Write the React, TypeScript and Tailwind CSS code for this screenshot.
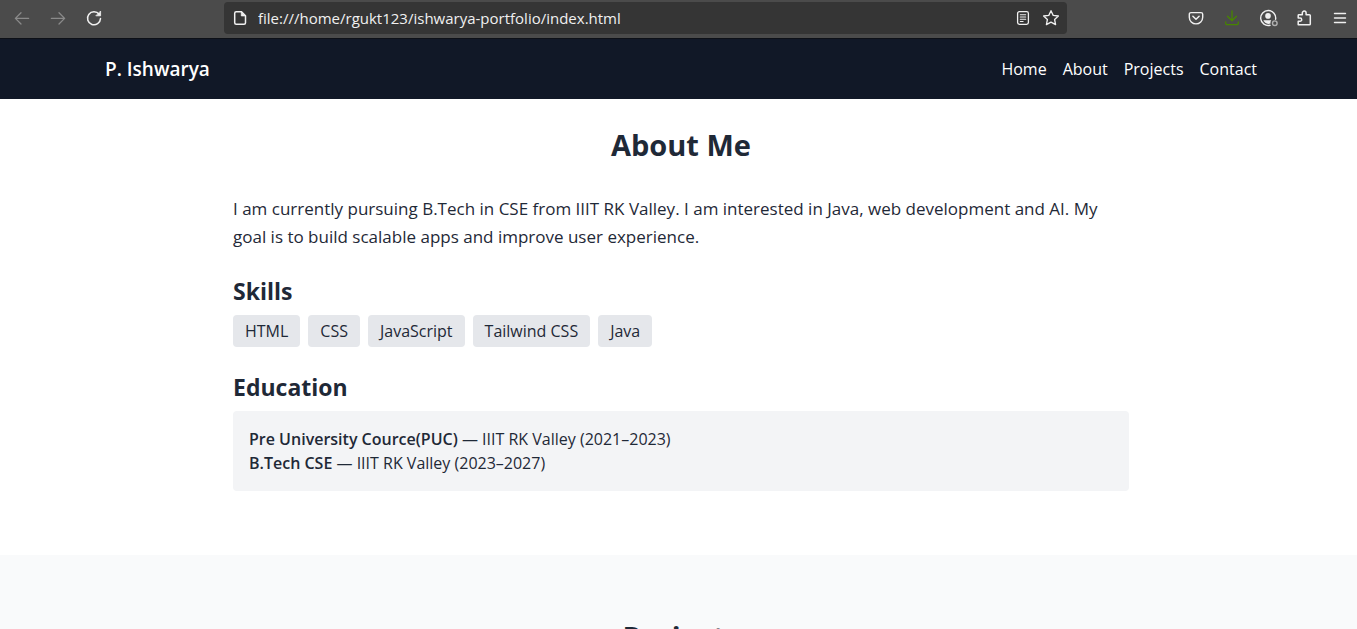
import React from "react";

type IconProps = { children: React.ReactNode; className?: string };

function Icon({ children, className = "" }: IconProps) {
  return (
    <svg
      viewBox="0 0 16 16"
      className={`size-4 overflow-visible ${className}`}
      fill="none"
      stroke="currentColor"
      strokeWidth="1.3"
      strokeLinecap="round"
      strokeLinejoin="round"
      aria-hidden="true"
    >
      {children}
    </svg>
  );
}

type ToolButtonProps = { label: string; className?: string; disabled?: boolean; children: React.ReactNode };

function ToolButton({ label, className = "text-[#f0f0f0]", disabled, children }: ToolButtonProps) {
  return (
    <button type="button" aria-label={label} disabled={disabled} className={`size-4 shrink-0 ${className}`}>
      <Icon>{children}</Icon>
    </button>
  );
}

function BrowserBar() {
  return (
    <div className="flex shrink-0 items-center border-b border-[#0d1017] bg-[#4b4b4b] pt-0.5 pr-[9px] pb-1 pl-3.5">
      <div className="flex gap-5">
        <ToolButton label="Back" disabled className="text-[#8a8a8a]">
          <path d="M14.6 8.4H1.4M7 2.8 1.4 8.4 7 14" />
        </ToolButton>
        <ToolButton label="Forward" disabled className="text-[#8a8a8a]">
          <path d="M1.4 8.4h13.2M9 2.8l5.6 5.6L9 14" />
        </ToolButton>
        <ToolButton label="Reload">
          <path d="M13.2 4.4A6.5 6.5 0 1 0 14.5 8.6" strokeWidth="1.5" />
          <path d="M14.6 1.4v4.4h-4.4z" fill="currentColor" strokeWidth="0.8" />
        </ToolButton>
      </div>

      <div className="mr-[121px] ml-[122px] flex h-8 min-w-0 flex-1 items-center rounded bg-[#353535] px-2 text-[#f0f0f0]">
        <Icon className="shrink-0">
          <path
            d="M4.2 1.7h5.3l4 4v7.1a1.5 1.5 0 0 1-1.5 1.5H4.2a1.5 1.5 0 0 1-1.5-1.5V3.2a1.5 1.5 0 0 1 1.5-1.5z"
            strokeWidth="1.5"
          />
          <path d="M9.3 1.9v4h4z" fill="currentColor" strokeWidth="0.8" />
        </Icon>
        <input
          type="text"
          aria-label="Address"
          defaultValue="file:///home/rgukt123/ishwarya-portfolio/index.html"
          className="ml-2.5 min-w-0 flex-1 bg-transparent text-[15px] leading-5 outline-none"
        />
        <div className="flex gap-3">
          <ToolButton label="Reader view">
            <rect x="2.6" y="1.6" width="10.8" height="12.8" rx="1.8" />
            <path d="M5.3 4.7h5.4M5.3 7h5.4M5.3 9.3h5.4M5.3 11.5h2.8" strokeWidth="1.1" />
          </ToolButton>
          <ToolButton label="Bookmark this page">
            <path d="M8 .7l2.2 4.700 5.200.6-3.800 3.500 1 5.100L8 12.100l-4.600 2.500 1-5.100L.6 6l5.200-.6z" />
          </ToolButton>
        </div>
      </div>

      <div className="flex gap-5">
        <ToolButton label="Save to Pocket">
          <path
            d="M3 2.6h10a1.7 1.7 0 0 1 1.7 1.7v2.9a6.7 6.7 0 0 1-13.4 0V4.3A1.7 1.7 0 0 1 3 2.6z"
            strokeWidth="1.4"
          />
          <path d="M4.9 6.3 8 9.2l3.1-2.9" strokeWidth="1.5" />
        </ToolButton>
        <ToolButton label="Downloads" className="text-[#478500]">
          <path d="M8 .8v9.7M3.5 6.3 8 10.7l4.5-4.4M1.7 12v1.3a1.4 1.4 0 0 0 1.4 1.4h9.8a1.4 1.4 0 0 0 1.4-1.4V12" />
        </ToolButton>
        <ToolButton label="Account">
          <path d="M15.6 9.2A7.5 7.5 0 1 0 10 15.3" strokeWidth="1.4" />
          <circle cx="8" cy="5.9" r="2.8" fill="currentColor" stroke="none" />
          <path d="M3.6 10.3h7.7a3.5 3.5 0 0 0-.8 3.2A6 6 0 0 1 3.6 11z" fill="currentColor" stroke="none" />
          <circle cx="14.8" cy="13.2" r="2.3" stroke="#b0b0b0" strokeWidth="1.4" />
        </ToolButton>
        <ToolButton label="Extensions">
          <path
            d="M2.2 14.8v-3.5h1.9a1.5 1.5 0 0 0 0-3.2H2.2V5.5a.7.7 0 0 1 .7-.7h3.4V3a1.9 1.9 0 0 1 3.8 0v1.8h3.3a.9.9 0 0 1 .9.9v8.2a.9.9 0 0 1-.9.9z"
            strokeWidth="1.5"
          />
        </ToolButton>
        <ToolButton label="Open menu">
          <path d="M2.5 3.5h11M2.5 8h11M2.5 12.5h11" strokeWidth="1.4" />
        </ToolButton>
      </div>
    </div>
  );
}

const links = ["Home", "About", "Projects", "Contact"];
const skills = ["HTML", "CSS", "JavaScript", "Tailwind CSS", "Java"];
const education = [
  { title: "Pre University Cource(PUC)", detail: "IIIT RK Valley (2021–2023)" },
  { title: "B.Tech CSE", detail: "IIIT RK Valley (2023–2027)" },
];

export default function App() {
  return (
    <div className="flex h-screen flex-col overflow-hidden bg-white font-['Open_Sans','Noto_Sans',sans-serif] text-base leading-6 text-[#1f2937]">
      <BrowserBar />
      <div className="min-h-0 flex-1 overflow-hidden">
        <header className="bg-[#111827] py-4 pl-[5px] text-white">
          <nav className="mx-auto flex max-w-6xl items-center justify-between">
            <h1 className="text-[19px] leading-7 font-semibold">P. Ishwarya</h1>
            <ul className="flex gap-4">
              {links.map((link) => (
                <li key={link}>
                  <a href={`#${link.toLowerCase()}`}>{link}</a>
                </li>
              ))}
            </ul>
          </nav>
        </header>

        <main>
          <section id="about" className="pt-7 pb-16 pl-[5px]">
            <div className="mx-auto max-w-4xl">
              <h2 className="mb-8 text-center text-[29px] leading-9 font-bold">About Me</h2>
              <p className="text-[17px] leading-7">
                I am currently pursuing B.Tech in CSE from IIIT RK Valley. I am interested in Java, web development
                and AI. My goal is to build scalable apps and improve user experience.
              </p>
              <h3 className="mt-6 mb-2 text-[23px] leading-8 font-bold">Skills</h3>
              <ul className="flex flex-wrap gap-2">
                {skills.map((skill) => (
                  <li key={skill} className="rounded bg-[#e5e7eb] px-3 py-1">
                    {skill}
                  </li>
                ))}
              </ul>
              <h3 className="mt-6 mb-2 text-[23px] leading-8 font-bold">Education</h3>
              <ul className="rounded bg-[#f3f4f6] p-4">
                {education.map((item) => (
                  <li key={item.title}>
                    <strong className="font-semibold">{item.title}</strong> — {item.detail}
                  </li>
                ))}
              </ul>
            </div>
          </section>

          <section id="projects" className="bg-[#f9fafb] py-16 pl-[5px]">
            <h2 className="text-center text-[29px] leading-9 font-bold">Projects</h2>
          </section>
        </main>
      </div>
    </div>
  );
}
